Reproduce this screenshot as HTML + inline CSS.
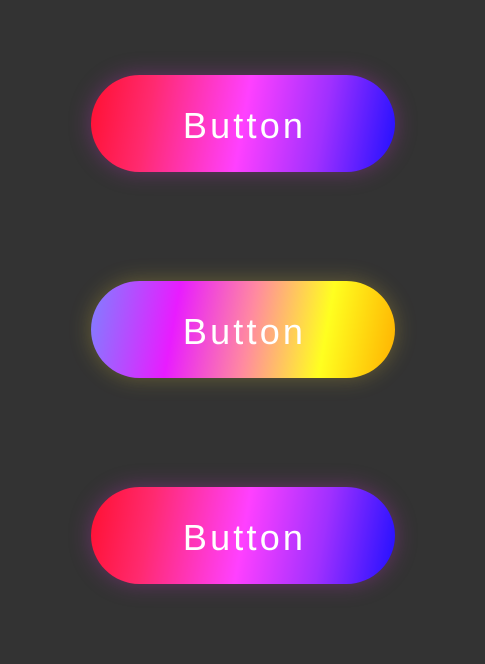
<!DOCTYPE html>
<html><head><style>
html,body{margin:0;padding:0;background:#333;width:485px;height:664px;overflow:hidden}
.b{position:absolute;left:91px;width:304px;height:97px;border-radius:49px;color:#fff;
font-family:"Liberation Sans",sans-serif;font-size:36px;letter-spacing:3.2px;
display:flex;align-items:center;justify-content:center;padding-left:3px;padding-top:4px;box-sizing:border-box}
.g1{background:linear-gradient(100deg,#ff1030 0%,#ff2a70 20%,#ff40ff 50%,#a030ff 75%,#2010ff 100%);
box-shadow:0 0 22px rgba(200,50,200,.35)}
.g2{background:linear-gradient(100deg,#7f80ff 0%,#e81cff 28%,#ff8aa0 52%,#ffff20 76%,#ffb000 100%);
box-shadow:0 0 22px rgba(230,200,60,.3)}
</style></head><body>
<div class="b g1" style="top:75px">Button</div>
<div class="b g2" style="top:281px">Button</div>
<div class="b g1" style="top:487px">Button</div>
</body></html>
